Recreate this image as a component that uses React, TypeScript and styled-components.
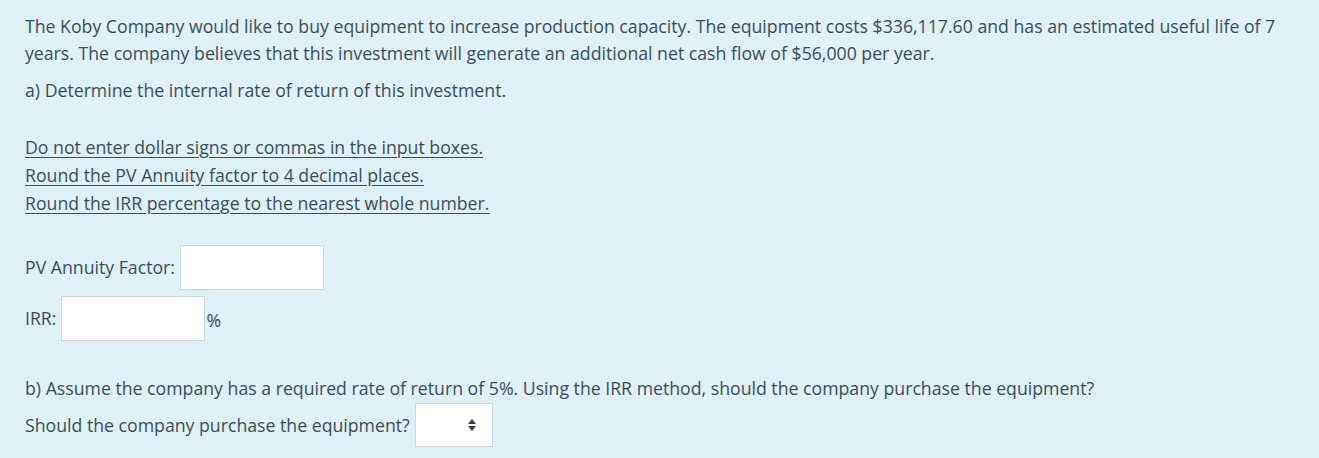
import React from 'react'
import styled, { createGlobalStyle } from 'styled-components'

const GlobalStyle = createGlobalStyle`
  html, body {
    margin: 0;
    padding: 0;
    background: #dff0f7;
  }
  body {
    font-family: 'Open Sans', 'Segoe UI', sans-serif;
    color: #3a4f5c;
  }
`

const Page = styled.div`
  width: 1319px;
  height: 458px;
  box-sizing: border-box;
  padding: 13px 25px 0 25px;
  background: #dff0f7;
  font-size: 17.7px;
  line-height: 27px;
`

const Para = styled.p<{ gap?: number }>`
  margin: 0 0 ${({ gap }) => gap ?? 10}px 0;
`

const Notes = styled.div`
  display: flex;
  flex-direction: column;
  margin-bottom: 28px;
`

const Note = styled.span`
  text-decoration: underline;
  text-underline-offset: 3px;
  line-height: 28px;
  align-self: flex-start;
`

const Row = styled.div<{ gap?: number }>`
  display: flex;
  align-items: center;
  margin-bottom: ${({ gap }) => gap ?? 6}px;
`

const Label = styled.label`
  margin-right: 5px;
`

const Box = styled.input`
  width: 144px;
  height: 45px;
  box-sizing: border-box;
  border: 1px solid #ccd6dd;
  background: #fff;
  margin: 0;
  padding: 0 8px;
  font: inherit;
  outline: none;
`

const Unit = styled.span`
  margin-left: 1px;
  padding-top: 4px;
`

const SelectBox = styled.div`
  width: 78px;
  height: 44px;
  box-sizing: border-box;
  border: 1px solid #ccd6dd;
  background: #fff;
  display: flex;
  align-items: center;
  justify-content: flex-end;
  padding-right: 16px;
`

export default function App() {
  return (
    <>
      <GlobalStyle />
      <Page>
        <Para gap={10}>
          The Koby Company would like to buy equipment to increase production capacity. The equipment costs $336,117.60 and has an estimated useful life of 7 years. The company believes that this investment will generate an additional net cash flow of $56,000 per year.
        </Para>
        <Para gap={29}>a) Determine the internal rate of return of this investment.</Para>
        <Notes>
          <Note>Do not enter dollar signs or commas in the input boxes.</Note>
          <Note>Round the PV Annuity factor to 4 decimal places.</Note>
          <Note>Round the IRR percentage to the nearest whole number.</Note>
        </Notes>
        <Row>
          <Label>PV Annuity Factor:</Label>
          <Box />
        </Row>
        <Row gap={34}>
          <Label>IRR:</Label>
          <Box />
          <Unit>%</Unit>
        </Row>
        <Para gap={1}>
          b) Assume the company has a required rate of return of 5%. Using the IRR method, should the company purchase the equipment?
        </Para>
        <Row>
          <Label>Should the company purchase the equipment?</Label>
          <SelectBox>
            <svg width="8" height="12" viewBox="0 0 8 12">
              <path d="M4 0 L8 5 L0 5 Z" fill="#3a3f44" />
              <path d="M0 7 L8 7 L4 12 Z" fill="#3a3f44" />
            </svg>
          </SelectBox>
        </Row>
      </Page>
    </>
  )
}
